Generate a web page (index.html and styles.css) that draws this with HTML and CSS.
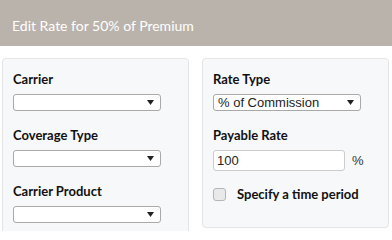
FILE: index.html
```html
<!DOCTYPE html>
<html>
<head>
<meta charset="utf-8">
<link rel="stylesheet" href="styles.css">
</head>
<body>
<div class="header">Edit Rate for 50% of Premium</div>
<div class="panels">
  <div class="panel left">
    <div class="label">Carrier</div>
    <div class="sel"><select><option></option></select><svg class="arrow" width="7" height="5" viewBox="0 0 7 5"><path d="M0 0H7L3.5 5Z" fill="#222"/></svg></div>
    <div class="label">Coverage Type</div>
    <div class="sel"><select><option></option></select><svg class="arrow" width="7" height="5" viewBox="0 0 7 5"><path d="M0 0H7L3.5 5Z" fill="#222"/></svg></div>
    <div class="label">Carrier Product</div>
    <div class="sel"><select><option></option></select><svg class="arrow" width="7" height="5" viewBox="0 0 7 5"><path d="M0 0H7L3.5 5Z" fill="#222"/></svg></div>
  </div>
  <div class="panel right">
    <div class="label">Rate Type</div>
    <div class="sel"><select><option>% of Commission</option></select><svg class="arrow" width="7" height="5" viewBox="0 0 7 5"><path d="M0 0H7L3.5 5Z" fill="#222"/></svg></div>
    <div class="label">Payable Rate</div>
    <div class="rate-row"><input class="rate" type="text" value="100"><span class="pct">%</span></div>
    <div class="check-row"><span class="box"></span><span class="check-label">Specify a time period</span></div>
  </div>
</div>
</body>
</html>
```
FILE: styles.css
```css
html, body { margin: 0; padding: 0; background: #fff; }
body { font-family: Lato, "Liberation Sans", sans-serif; width: 392px; height: 231px; overflow: hidden; }
.header {
  height: 46px;
  background: #bab3ab;
  color: #fff;
  font-size: 14px;
  line-height: 51px;
  padding-left: 12px;
  box-sizing: border-box;
}
.panels {
  display: flex;
  align-items: flex-start;
  gap: 13px;
  padding: 12px 3px 0 2px;
}
.panel {
  flex: 1;
  background: #f7f8fa;
  border: 1px solid #e4e5e7;
  border-radius: 4px;
  padding: 11px 10px 20px 10px;
}
.label {
  font-weight: 700;
  font-size: 13px;
  line-height: 18px;
  color: #111;
  margin-bottom: 6px;
}
.sel { position: relative; width: 148px; height: 17px; margin-bottom: 15px; }
.sel select {
  appearance: none;
  -webkit-appearance: none;
  display: block;
  width: 148px;
  height: 17px;
  box-sizing: border-box;
  margin: 0;
  border: 1px solid #a9a9a9;
  border-radius: 3px;
  background: #fff;
  font-family: "Liberation Sans", Arial, sans-serif;
  font-size: 13px;
  color: #222;
  padding: 0 0 0 4px;
  line-height: 15px;
}
.arrow { position: absolute; right: 7px; top: 6px; }
.rate-row { display: flex; align-items: center; height: 21px; margin-bottom: 14px; }
.rate {
  width: 132px;
  height: 21px;
  box-sizing: border-box;
  margin: 0;
  border: 1px solid #ccc;
  border-radius: 3px;
  background: #fff;
  font-family: "Liberation Sans", Arial, sans-serif;
  font-size: 13px;
  color: #222;
  padding: 0 0 0 3px;
}
.pct { font-family: "Liberation Sans", Arial, sans-serif; font-size: 13px; color: #333; margin-left: 7px; }
.check-row { display: flex; align-items: center; height: 18px; margin-bottom: 4px; }
.box {
  width: 11px; height: 11px;
  border: 1px solid #b5b5b5;
  border-radius: 3px;
  background: #e9e9e9;
}
.check-label { font-weight: 700; font-size: 13px; color: #111; margin-left: 11px; }
```
